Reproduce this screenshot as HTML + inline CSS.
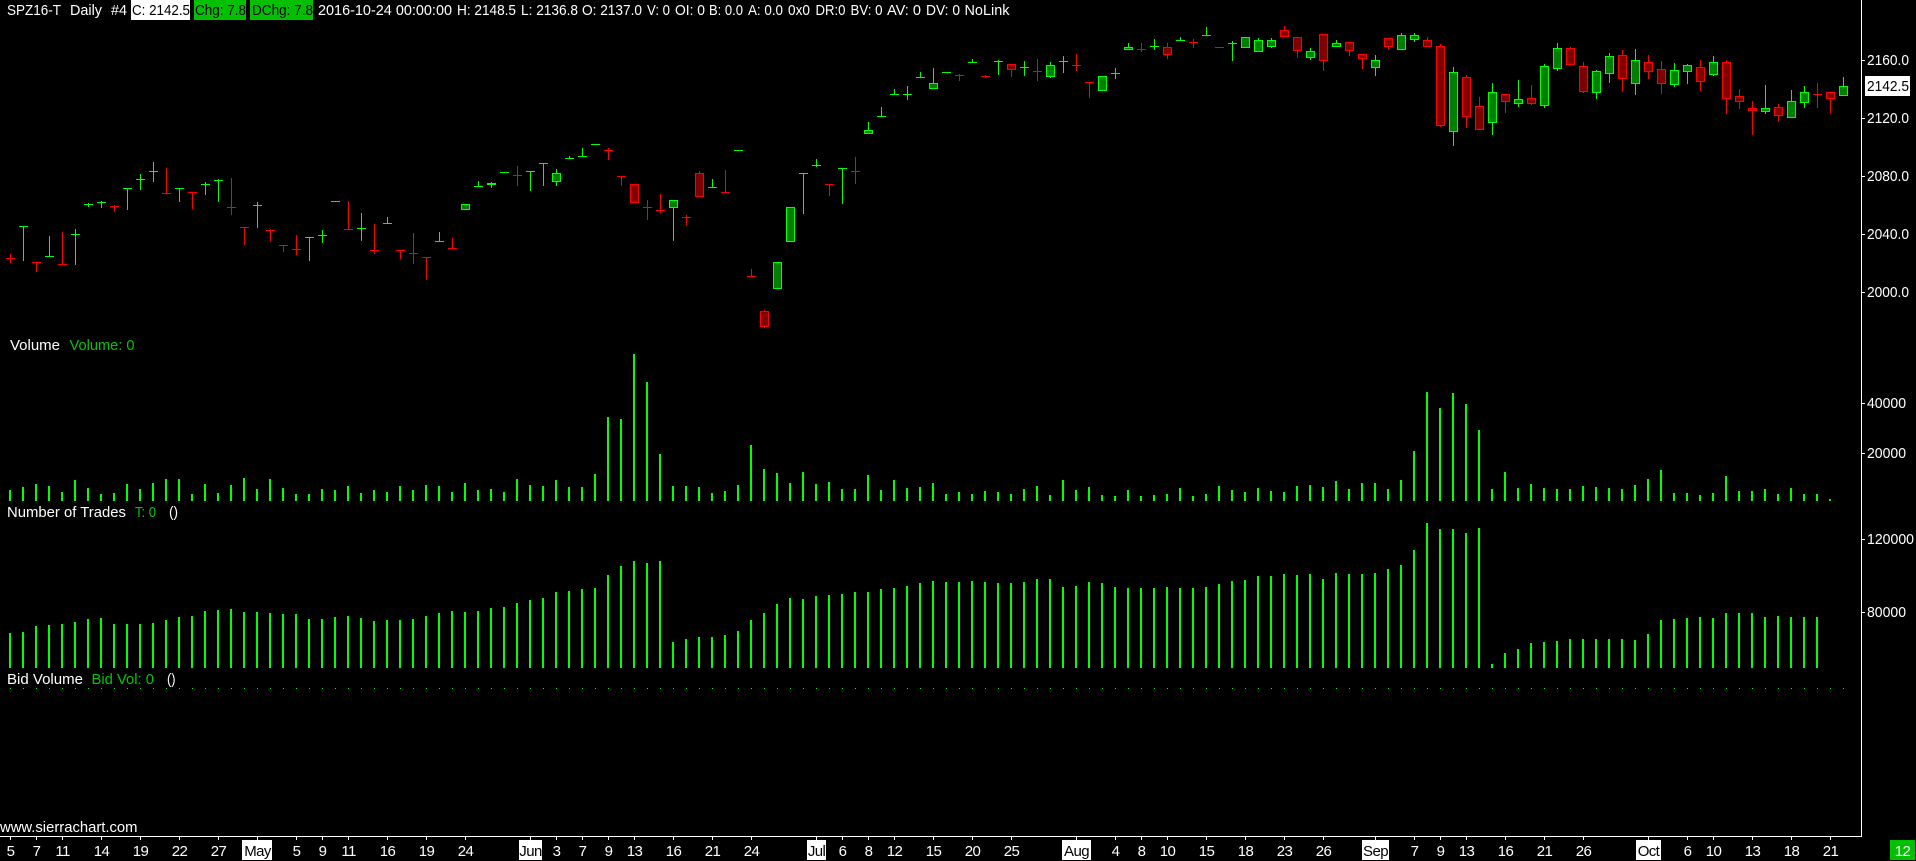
<!DOCTYPE html>
<html lang="en">
<head>
<meta charset="utf-8">
<title>SPZ16-T Daily</title>
<style>
html,body{margin:0;padding:0;background:#000;width:1916px;height:861px;overflow:hidden}
svg{display:block;position:absolute;left:0;top:0}
text{font-family:"Liberation Sans",Arial,sans-serif;font-size:15px;fill:#fff}
.k{fill:#000}
.g{fill:#00c800}
.m{text-anchor:middle;letter-spacing:-.6px}
</style>
</head>
<body>
<svg width="1916" height="861" viewBox="0 0 1916 861" xmlns="http://www.w3.org/2000/svg">
<rect width="1916" height="861" fill="#000"/>
<g shape-rendering="crispEdges">
<rect x="131" y="0" width="59" height="20" fill="#fff"/>
<rect x="194" y="0" width="52" height="20" fill="#00c000"/>
<rect x="250" y="0" width="63" height="20" fill="#00c000"/>
<rect x="1861" y="0" width="1" height="837" fill="#fff"/>
<rect x="0" y="836" width="1862" height="1" fill="#fff"/>
<rect x="1865" y="76" width="45" height="20" fill="#fff"/>
<rect x="242" y="840" width="30" height="20" fill="#fff"/>
<rect x="519" y="840" width="23" height="20" fill="#fff"/>
<rect x="807" y="840" width="19" height="20" fill="#fff"/>
<rect x="1062" y="840" width="29" height="20" fill="#fff"/>
<rect x="1362" y="840" width="27" height="20" fill="#fff"/>
<rect x="1636" y="840" width="25" height="20" fill="#fff"/>
<rect x="1890" y="840" width="25" height="20" fill="#00c000"/>
<path id="ticks" fill="#fff" d=""/>
<path id="vg" fill="#00ff00" d=""/>
<path id="gb" fill="#00ff00" d=""/>
<path id="gi" fill="#008000" d=""/>
<path id="rb" fill="#ff0000" d=""/>
<path id="ri" fill="#800000" d=""/>
</g>

<text x="7" y="15" textLength="54" lengthAdjust="spacingAndGlyphs">SPZ16-T</text>
<text x="70" y="15" textLength="32" lengthAdjust="spacingAndGlyphs">Daily</text>
<text x="111" y="15" textLength="16" lengthAdjust="spacingAndGlyphs">#4</text>
<text class="k" x="132" y="15" textLength="58" lengthAdjust="spacingAndGlyphs">C: 2142.5</text>
<text class="k" x="195" y="15" textLength="51" lengthAdjust="spacingAndGlyphs">Chg: 7.8</text>
<text class="k" x="252" y="15" textLength="61" lengthAdjust="spacingAndGlyphs">DChg: 7.8</text>
<text x="318" y="15" textLength="134" lengthAdjust="spacingAndGlyphs">2016-10-24 00:00:00</text>
<text x="457" y="15" textLength="59" lengthAdjust="spacingAndGlyphs">H: 2148.5</text>
<text x="521" y="15" textLength="57" lengthAdjust="spacingAndGlyphs">L: 2136.8</text>
<text x="582" y="15" textLength="60" lengthAdjust="spacingAndGlyphs">O: 2137.0</text>
<text x="647" y="15" textLength="23" lengthAdjust="spacingAndGlyphs">V: 0</text>
<text x="675" y="15" textLength="30" lengthAdjust="spacingAndGlyphs">OI: 0</text>
<text x="709" y="15" textLength="34" lengthAdjust="spacingAndGlyphs">B: 0.0</text>
<text x="748" y="15" textLength="35" lengthAdjust="spacingAndGlyphs">A: 0.0</text>
<text x="788" y="15" textLength="22" lengthAdjust="spacingAndGlyphs">0x0</text>
<text x="815.5" y="15" textLength="30" lengthAdjust="spacingAndGlyphs">DR:0</text>
<text x="850.5" y="15" textLength="32" lengthAdjust="spacingAndGlyphs">BV: 0</text>
<text x="887" y="15" textLength="34" lengthAdjust="spacingAndGlyphs">AV: 0</text>
<text x="926" y="15" textLength="34" lengthAdjust="spacingAndGlyphs">DV: 0</text>
<text x="964.5" y="15" textLength="45" lengthAdjust="spacingAndGlyphs">NoLink</text>

<text x="1867" y="65" textLength="42" lengthAdjust="spacingAndGlyphs">2160.0</text>
<text class="k" x="1867" y="91" textLength="42" lengthAdjust="spacingAndGlyphs">2142.5</text>
<text x="1867" y="123" textLength="42" lengthAdjust="spacingAndGlyphs">2120.0</text>
<text x="1867" y="181" textLength="42" lengthAdjust="spacingAndGlyphs">2080.0</text>
<text x="1867" y="239" textLength="42" lengthAdjust="spacingAndGlyphs">2040.0</text>
<text x="1867" y="297" textLength="42" lengthAdjust="spacingAndGlyphs">2000.0</text>
<text x="1867" y="408" textLength="39" lengthAdjust="spacingAndGlyphs">40000</text>
<text x="1867" y="458" textLength="39" lengthAdjust="spacingAndGlyphs">20000</text>
<text x="1867" y="544" textLength="47" lengthAdjust="spacingAndGlyphs">120000</text>
<text x="1867" y="617" textLength="39" lengthAdjust="spacingAndGlyphs">80000</text>

<text x="10" y="350" textLength="50" lengthAdjust="spacingAndGlyphs">Volume</text>
<text class="g" x="69.5" y="350" textLength="65" lengthAdjust="spacingAndGlyphs">Volume: 0</text>
<text x="7" y="517" textLength="119" lengthAdjust="spacingAndGlyphs">Number of Trades</text>
<text class="g" x="135" y="517" textLength="21" lengthAdjust="spacingAndGlyphs">T: 0</text>
<text x="169" y="517" textLength="9" lengthAdjust="spacingAndGlyphs">()</text>
<text x="7" y="684" textLength="76" lengthAdjust="spacingAndGlyphs">Bid Volume</text>
<text class="g" x="91.5" y="684" textLength="62.5" lengthAdjust="spacingAndGlyphs">Bid Vol: 0</text>
<text x="167" y="684" textLength="8.5" lengthAdjust="spacingAndGlyphs">()</text>
<text x="0" y="832" textLength="137.5" lengthAdjust="spacingAndGlyphs">www.sierrachart.com</text>

<g>
<text class="m" x="10.5" y="856">5</text>
<text class="m" x="36.5" y="856">7</text>
<text class="m" x="62.5" y="856">11</text>
<text class="m" x="101.5" y="856">14</text>
<text class="m" x="140.5" y="856">19</text>
<text class="m" x="179.5" y="856">22</text>
<text class="m" x="218.5" y="856">27</text>
<text class="m k" x="257.5" y="856">May</text>
<text class="m" x="296.5" y="856">5</text>
<text class="m" x="322.5" y="856">9</text>
<text class="m" x="348.5" y="856">11</text>
<text class="m" x="387.5" y="856">16</text>
<text class="m" x="426.5" y="856">19</text>
<text class="m" x="465.5" y="856">24</text>
<text class="m k" x="530.5" y="856">Jun</text>
<text class="m" x="556.5" y="856">3</text>
<text class="m" x="582.5" y="856">7</text>
<text class="m" x="608.5" y="856">9</text>
<text class="m" x="634.5" y="856">13</text>
<text class="m" x="673.5" y="856">16</text>
<text class="m" x="712.5" y="856">21</text>
<text class="m" x="751.5" y="856">24</text>
<text class="m k" x="816.5" y="856">Jul</text>
<text class="m" x="842.5" y="856">6</text>
<text class="m" x="868.5" y="856">8</text>
<text class="m" x="894.5" y="856">12</text>
<text class="m" x="933.5" y="856">15</text>
<text class="m" x="972.5" y="856">20</text>
<text class="m" x="1011.5" y="856">25</text>
<text class="m k" x="1076.5" y="856">Aug</text>
<text class="m" x="1115.5" y="856">4</text>
<text class="m" x="1141.5" y="856">8</text>
<text class="m" x="1167.5" y="856">10</text>
<text class="m" x="1206.5" y="856">15</text>
<text class="m" x="1245.5" y="856">18</text>
<text class="m" x="1284.5" y="856">23</text>
<text class="m" x="1323.5" y="856">26</text>
<text class="m k" x="1375.5" y="856">Sep</text>
<text class="m" x="1414.5" y="856">7</text>
<text class="m" x="1440.5" y="856">9</text>
<text class="m" x="1466.5" y="856">13</text>
<text class="m" x="1505.5" y="856">16</text>
<text class="m" x="1544.5" y="856">21</text>
<text class="m" x="1583.5" y="856">26</text>
<text class="m k" x="1648.5" y="856">Oct</text>
<text class="m" x="1687.5" y="856">6</text>
<text class="m" x="1713.5" y="856">10</text>
<text class="m" x="1752.5" y="856">13</text>
<text class="m" x="1791.5" y="856">18</text>
<text class="m" x="1830.5" y="856">21</text>
<text class="m" x="1902.5" y="856">12</text>
</g>
</svg>
<script>
(function(){
var R=Math.round;
/* each: colour, hi, lo, top, bottom (values are 3x real y). tick when only 3 numbers */
var C=[
['r',762,789,773],['g',679,782,679],['r',787,815,787],['g',708,767,767],['r',696,794,791],['g',688,794,701],
['g',610,621,611],['g',604,623,607],['r',616,635,617],['g',565,629,565],['g',522,570,536],['g',487,546,514],
['r',504,581,580],['g',563,605,564],['r',575,627,576],['g',547,585,552],['g',537,605,541],['r',533,644,622],
['r',682,735,682],['g',606,684,616],['r',688,723,690],['r',736,755,736],['r',705,764,748],['g',712,782,712],
['g',690,728,706],['g',604,604,604],['r',603,689,688],['g',639,722,685],['r',672,761,751],['g',651,670,670],
['r',751,777,751],['r',699,791,760],['r',772,839,772],['g',697,725,724],['r',714,745,743],['g',613,628,613,628],
['g',544,560,559],['g',547,563,549,553],['g',517,517,517],['r',498,557,525],['g',514,572,514],['g',490,557,490],
['g',507,557,520,542],['g',467,476,475],['g',445,467,467],['g',433,433,433],['r',444,480,450],['r',529,557,529],
['r',553,605,553,605],
['r',600,660,622],['r',582,638,631],['g',601,722,601,620],['r',645,675,652],['r',514,587,520,587],['g',537,560,560],
['r',510,575,575],['g',451,451,451],['r',807,830,829],['r',930,984,934,977],['g',787,863,787,863],['g',622,722,622,722],
['g',520,642,520],['g',477,500,495],['r',553,587,553],['g',505,612,505],['r',472,552,514],['g',366,398,391,398],
['g',321,347,347],['g',267,281,281],['g',258,300,281],['g',216,231,230],['g',204,263,250,263],['g',217,217,217],
['r',223,243,224],['g',177,186,185],['r',226,231,227],['g',181,225,183],['r',193,231,193,206],['g',184,228,201],
['r',177,243,214],['g',187,234,196,227],['g',168,219,183],['r',162,213,196],['r',246,294,247],['g',229,269,229,269],
['g',205,237,218],['g',129,147,142,146],['r',129,156,148],['g',118,150,138],['r',129,177,142,161],['g',111,123,121],
['r',117,144,127],['g',81,105,104],['r',142,142,142],['g',124,183,129],['g',112,140,112,140],['g',114,156,121,152],
['g',114,144,121,137],
['r',78,107,91,107],['r',112,174,112,149],['g',144,180,154,170],['r',103,213,103,179],['g',121,137,130,137],
['r',127,168,127,149],['r',163,207,163,173],['g',165,228,181,200],['r',115,150,115,137],['g',100,146,106,146],
['g',100,126,106,116],['r',112,141,121,137],['r',133,381,139,374],['g',201,438,217,392],['r',226,384,232,347],
['r',291,386,319,386],['g',249,405,277,365],['r',283,339,283,302],['g',240,321,298,308],['r',255,315,295,308],
['g',193,324,199,314],['g',129,213,145,203],['r',141,194,145,191],['r',186,279,199,272],['g',210,297,214,275],
['g',159,249,169,218],['r',150,276,166,233],['g',147,285,181,248],['r',165,237,187,212],['r',183,282,208,248],
['g',189,261,211,251],['g',192,252,196,212],['r',180,273,202,242],['g',168,228,187,221],['r',180,342,187,293],
['r',267,327,289,304],['r',303,405,325,329],['g',255,342,325,332],['r',312,366,322,344],['g',270,350,304,350],
['g',258,324,277,305],['r',249,324,281],['r',277,339,277,293],['g',231,284,259,284]
];
/* volume tops, 3x scale with per-group offsets */
var V1=[480,471,462,468,486,450,474,492,489,462,477,459,447,447,492,462,489,465,444,477,447,474,492,492,477,480,468,489,480,486,468,480,465,468,486,459,480,477,486,447,465,468,450,471,471,432,261,267,72];
var V2=[126,342,438,438,441,459,453,435,315,387,399,429,396,432,426,447,447,405,450,420,444,441,429,462,456,462,453,456,462,447,438,465,420,450,441,465,468,450,468,465,462,444,468,462,438,450,456,444,453];
var V3=[366,348,345,351,333,357,339,339,357,330,243,66,114,69,102,180,357,306,354,342,354,357,357,348,351,354,357,345,327,300,369,369,375,369,318,363,363,357,372,354,372,372,387];
var T1=[909,906,888,885,882,876,867,864,882,882,882,879,870,861,858,843,840,837,846,846,849,852,852,867,867,861,858,864,873,870,870,867,858,849,843,846,843,834,831,819,810,804,786,783,777,774,735,708,693];
var T2=[669,663,906,897,891,891,885,873,840,819,792,774,777,768,765,762,756,756,747,744,738,729,723,726,726,723,726,729,729,726,717,717,741,738,726,729,741,744,744,744,741,744,744,741,732,723,720,708,708];
var T3=[612,615,612,627,609,612,612,609,597,585,540,459,477,477,489,474,882,849,837,819,816,813,807,807,807,807,807,810,792,750,747,744,741,744,729,729,729,741,738,741,741,741];
function rect(x,y,w,h){return 'M'+x+' '+y+'h'+w+'v'+h+'h'+(-w)+'z'}
var gb='',gi='',rb='',ri='',vg='',t='';
C.forEach(function(c,i){
  var x=10+13*i,hi=R(c[1]/3),lo=R(c[2]/3),s='';
  if(lo>hi)s+=rect(x,hi,1,lo-hi);
  var inner='';
  if(c.length==4){s+=rect(x-4,R(c[3]/3),9,1);}
  else{
    var tp=R(c[3]/3),bt=R(c[4]/3);
    s+=rect(x-4,tp,9,bt-tp+1);
    if(bt-tp>1)inner=rect(x-3,tp+1,7,bt-tp-1);
  }
  if(c[0]=='g'){gb+=s;gi+=inner}else{rb+=s;ri+=inner}
  /* dotted zero line */
  vg+=rect(x,688,1,1);
});
function bars(a,off,start,base){
  a.forEach(function(d,k){
    var x=9+13*(start+k),y=R(off+d/3);
    vg+=rect(x,y,2,base-y);
  });
}
bars(V1,330,0,501);bars(V2,340,49,501);bars(V3,370,98,501);
bars(T1,330,0,668);bars(T2,340,49,668);bars(T3,370,98,668);
var ticksX=[0,2,4,7,10,13,16,19,22,24,26,29,32,35,40,42,44,46,48,51,54,57,62,64,66,68,71,74,77,82,85,87,89,92,95,98,101,105,108,110,112,115,118,121,126,129,131,134,137,140];
ticksX.forEach(function(i){t+=rect(10+13*i,837,1,3)});
[60,118,176,234,292,403,453,539,612].forEach(function(y){t+=rect(1862,y,3,1)});
function set(id,d){document.getElementById(id).setAttribute('d',d)}
set('gb',gb);set('gi',gi);set('rb',rb);set('ri',ri);set('vg',vg);set('ticks',t);
})();
</script>
</body>
</html>
